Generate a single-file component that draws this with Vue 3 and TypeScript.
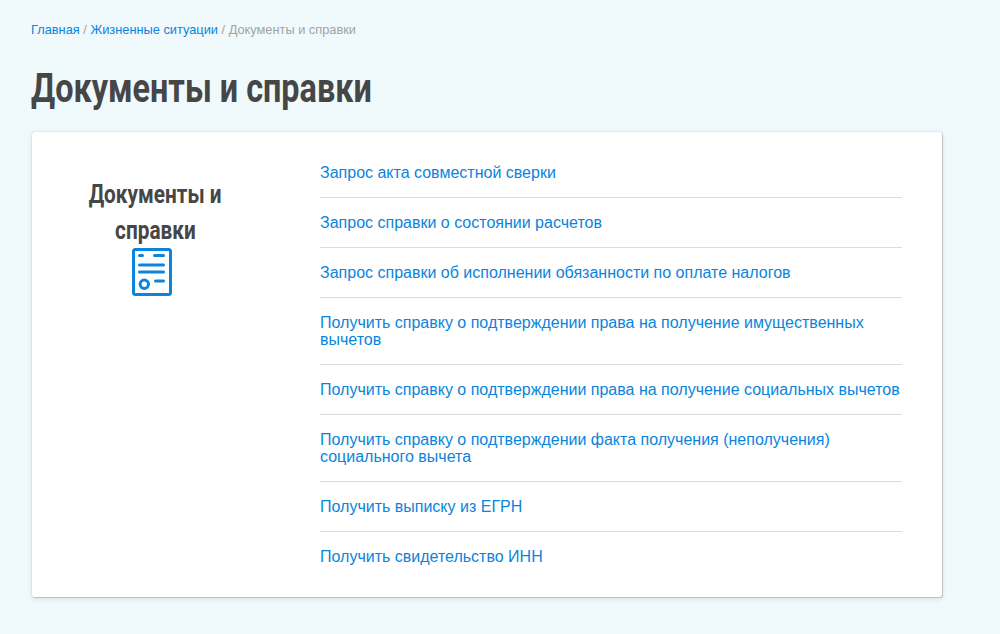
<script setup lang="ts">
const links: string[] = [
  'Запрос акта совместной сверки',
  'Запрос справки о состоянии расчетов',
  'Запрос справки об исполнении обязанности по оплате налогов',
  'Получить справку о подтверждении права на получение имущественных вычетов',
  'Получить справку о подтверждении права на получение социальных вычетов',
  'Получить справку о подтверждении факта получения (неполучения) социального вычета',
  'Получить выписку из ЕГРН',
  'Получить свидетельство ИНН',
]
</script>

<template>
  <div class="page">
    <nav class="crumbs">
      <a href="#">Главная</a> / <a href="#">Жизненные ситуации</a> / <span>Документы и справки</span>
    </nav>
    <h1 class="title"><span>Документы и справки</span></h1>
    <section class="card">
      <div class="side">
        <h2 class="side-title"><span>Документы и</span><span>справки</span></h2>
        <svg class="icon" width="40" height="48" viewBox="0 0 40 48" fill="none" stroke="#0a84dc" stroke-width="3" stroke-linecap="round">
          <rect x="1.5" y="1.5" width="37" height="45" rx="2" />
          <path d="M7.5 7.5h3M22.5 7.5h9M7.5 17h24M7.5 24h24M23.5 33h8" />
          <circle cx="12.3" cy="36.3" r="4.2" />
        </svg>
      </div>
      <ul class="list">
        <li v-for="link in links" :key="link"><a href="#">{{ link }}</a></li>
      </ul>
    </section>
  </div>
</template>

<style>
html, body { margin: 0; background: #f0f9fc; }
</style>

<style scoped>
.page {
  box-sizing: border-box;
  height: 634px;
  padding: 22px 58px 0 31px;
  font-family: "Liberation Sans", Arial, sans-serif;
  overflow: hidden;
}
a { color: #0a84dc; text-decoration: none; }
.crumbs { font-size: 12.8px; line-height: 15px; color: #a3a3a3; }
.crumbs a { color: #0a84dc; }
.title {
  margin: 24px 0 17px;
  font: 700 41px/54px Roboto, sans-serif;
  color: #464646;
}
.title span, .side-title span {
  display: block;
  width: max-content;
}
.title span { transform: scaleX(.79); transform-origin: left center; }
.card {
  display: flex;
  margin-left: 1px;
  background: #fff;
  border-radius: 2px;
  box-shadow: 0 0 1px rgba(0, 0, 0, .35), 1px 1px 1px rgba(0, 0, 0, .14), 0 2px 6px rgba(0, 0, 0, .1);
  padding: 16px 40px 16px 0;
}
.side {
  width: 288px;
  flex: none;
  display: flex;
  flex-direction: column;
  align-items: center;
  padding-top: 28px;
  box-sizing: border-box;
  padding-right: 41px;
}
.side-title {
  margin: 0;
  font: 700 26px/36px Roboto, sans-serif;
  color: #464646;
  display: flex;
  flex-direction: column;
  align-items: center;
}
.side-title span { transform: scaleX(.8); }
.icon { display: block; margin: 0 8px 0 0; }
.list { flex: 1; list-style: none; margin: 0; padding: 0; }
.list li {
  padding: 16px 0;
  font-size: 16px;
  line-height: 17px;
  border-bottom: 1px solid #dcdcdc;
}
.list li:last-child { border-bottom: 0; }
</style>
